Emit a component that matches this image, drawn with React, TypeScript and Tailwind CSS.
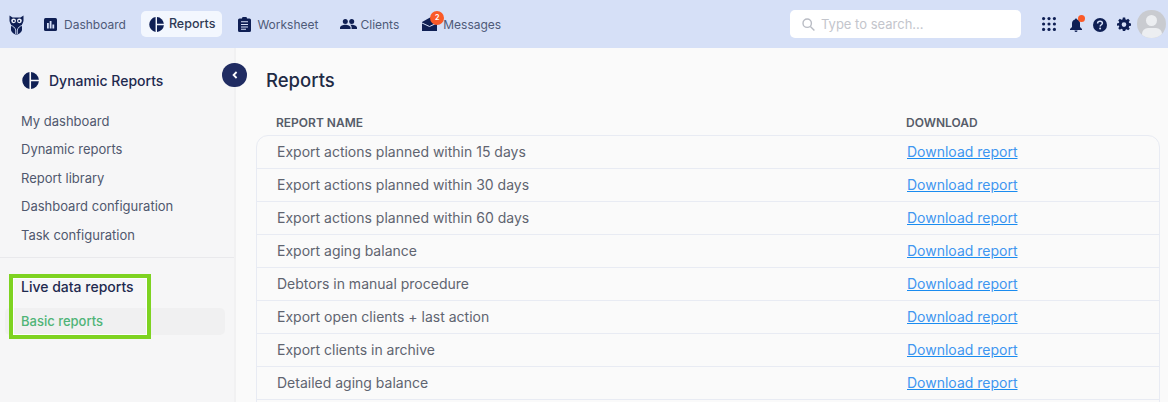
import React from "react";

const navy = "#0f1f54";

function PieIcon({ size = 16 }: { size?: number }) {
  return (
    <svg width={size} height={size} viewBox="0 0 16 16" className="shrink-0">
      <path d="M7 0.1A8 8 0 0 0 7 15.9Z" fill={navy} />
      <path d="M8.5 0.1A8 8 0 0 1 15.9 7.2H8.5Z" fill={navy} />
      <path d="M8.5 8.7H15.9A8 8 0 0 1 8.5 15.9Z" fill={navy} />
    </svg>
  );
}

function NavItem({ icon, label, active, gap = "gap-[7px]", extra = "" }: { icon: React.ReactNode; label: string; active?: boolean; gap?: string; extra?: string }) {
  return (
    <div className={`flex h-[26px] items-center ${gap} rounded-[5px] ${extra} ${active ? "bg-[#f3f7fe] pl-[8px] pr-[7px] text-[12.5px] font-medium text-[#2f3a55]" : "px-[8px] text-[12px] text-[#4e5a78]"}`}>
      {icon}
      <span className="pt-[1px]">{label}</span>
    </div>
  );
}

const reports = [
  "Export actions planned within 15 days",
  "Export actions planned within 30 days",
  "Export actions planned within 60 days",
  "Export aging balance",
  "Debtors in manual procedure",
  "Export open clients + last action",
  "Export clients in archive",
  "Detailed aging balance",
];

const sideLinks = ["My dashboard", "Dynamic reports", "Report library", "Dashboard configuration", "Task configuration"];

export default function App() {
  return (
    <div className="flex h-[402px] w-[1168px] flex-col overflow-hidden bg-[#fafafa] font-['Inter',sans-serif]">
      <header className="flex h-[48px] shrink-0 items-center bg-[#d6e0f7] pl-[9px] pr-[2px]">
        <svg width="15" height="20" viewBox="0 0 15 20" className="mr-[12px] mt-[1px] shrink-0">
          <path d="M0.5 0.5L3.5 2.5H11.5L14.5 0.5V5.5C14.5 7 13.5 8.5 13 9.5V15C12.5 17.5 9.5 19.5 7.5 19.5C5.5 19.5 2.5 17.5 2 15V9.5C1.5 8.5 0.5 7 0.5 5.5Z" fill={navy} />
          <circle cx="4.6" cy="5.8" r="2.4" fill="#eef2fc" />
          <circle cx="10.4" cy="5.8" r="2.4" fill="#eef2fc" />
          <circle cx="4.8" cy="5.9" r="1" fill={navy} />
          <circle cx="10.2" cy="5.9" r="1" fill={navy} />
          <path d="M2 10.5C4 11 6 12.5 6.7 15V19M13 10.5C11 11 9 12.5 8.3 15V19" stroke="#d6e0f7" strokeWidth="0.9" fill="none" />
        </svg>
        <nav className="flex items-center gap-[7px]">
          <NavItem
            label="Dashboard"
            icon={
              <svg width="13" height="13" viewBox="0 0 13 13">
                <rect width="13" height="13" rx="1.5" fill={navy} />
                <rect x="3" y="5" width="1.8" height="5.5" fill="#d6e0f7" />
                <rect x="5.7" y="3" width="1.8" height="7.5" fill="#d6e0f7" />
                <rect x="8.4" y="6.5" width="1.8" height="4" fill="#d6e0f7" />
              </svg>
            }
          />
          <NavItem label="Reports" active gap="gap-[5px]" icon={<PieIcon size={15} />} />
          <NavItem
            label="Worksheet"
            gap="gap-[6px]"
            extra="ml-[1px]"
            icon={
              <svg width="13" height="15" viewBox="0 0 13 15">
                <path d="M1.5 1.5H4A2.5 2 0 0 1 9 1.5H11.5A1.5 1.5 0 0 1 13 3V13.5A1.5 1.5 0 0 1 11.5 15H1.5A1.5 1.5 0 0 1 0 13.5V3A1.5 1.5 0 0 1 1.5 1.5Z" fill={navy} />
                <path d="M3 4.7H10M3 7.5H10M3 10H10M3 12.3H8" stroke="#d6e0f7" strokeWidth="1.1" />
              </svg>
            }
          />
          <NavItem
            label="Clients"
            gap="gap-[3px]"
            extra="-ml-[1px]"
            icon={
              <svg width="17" height="10" viewBox="0 0 17 10">
                <circle cx="5.3" cy="2.5" r="2.5" fill={navy} />
                <circle cx="11.7" cy="2.5" r="2.5" fill={navy} />
                <path d="M0 10V8.5C0 6.8 3 5.7 5.3 5.7S10.6 6.8 10.6 8.5V10Z" fill={navy} />
                <path d="M11.6 10V8.5C11.6 7.3 11 6.4 10.2 5.8C10.7 5.7 11.2 5.7 11.7 5.7C14 5.7 17 6.8 17 8.5V10Z" fill={navy} />
              </svg>
            }
          />
          <div className="relative ml-[8px] flex h-[26px] items-center gap-[6px] text-[12px] text-[#4e5a78]">
            <svg width="15" height="14" viewBox="0 0 15 14" className="-mt-[1px]">
              <path d="M0 5L9 0L15 4V14H0Z" fill={navy} />
              <path d="M0 6L7.5 9.5L15 6" stroke="#d6e0f7" strokeWidth="1" fill="none" />
            </svg>
            <span className="pt-[1px]">Messages</span>
            <span className="absolute left-[8px] top-[0px] flex h-[14px] w-[14px] items-center justify-center rounded-full bg-[#fa5a28] text-[7px] font-bold text-white">2</span>
          </div>
        </nav>
        <div className="ml-auto flex h-[28px] w-[231px] items-center gap-[6px] rounded-[5px] bg-white pl-[12px] text-[13px] text-[#c3c5cc]">
          <svg width="13" height="13" viewBox="0 0 13 13" fill="none" stroke="#b9bcc4" strokeWidth="1.4">
            <circle cx="5.2" cy="5.2" r="4.2" />
            <path d="M8.4 8.4L12.4 12.4" />
          </svg>
          <span className="pt-[1px]">Type to search...</span>
        </div>
        <svg width="14" height="14" viewBox="0 0 15 15" className="ml-[21px]" fill={navy}>
          {[1.7, 7.5, 13.3].flatMap((y) => [1.7, 7.5, 13.3].map((x) => <circle key={`${x}-${y}`} cx={x} cy={y} r="1.7" />))}
        </svg>
        <div className="relative ml-[14px] mt-[2px] h-[14px] w-[12px]">
          <svg width="12" height="14" viewBox="0 0 12 14" fill={navy}>
            <path d="M6 0.5C6.6 0.5 7 1 7 1.5C9 2 10 3.5 10 5.5V9L12 11V12H0V11L2 9V5.5C2 3.5 3 2 5 1.5C5 1 5.4 0.5 6 0.5Z" />
            <path d="M4.5 12.5H7.5A1.5 1.5 0 0 1 4.5 12.5Z" />
          </svg>
          <span className="absolute left-[8px] top-[-3px] h-[7px] w-[7px] rounded-full bg-[#fa5a28]" />
        </div>
        <svg width="14" height="14" viewBox="0 0 14 14" className="ml-[11px] mt-[1px]">
          <circle cx="7" cy="7" r="7" fill={navy} />
          <path d="M4.6 5.4C4.6 4 5.7 3.2 7 3.2C8.4 3.2 9.4 4 9.4 5.2C9.4 6.7 7.2 6.8 7.2 8.4" stroke="#d6e0f7" strokeWidth="1.5" fill="none" />
          <circle cx="7.1" cy="10.5" r="1" fill="#d6e0f7" />
        </svg>
        <svg width="14" height="14" viewBox="0 0 24 24" className="ml-[10px]" fill={navy}>
          <path fillRule="evenodd" d="M10 1h4l.6 3.1 1.9.8 2.6-1.8 2.8 2.8-1.8 2.6.8 1.9L24 11v4l-3.1.6-.8 1.9 1.8 2.6-2.8 2.8-2.6-1.8-1.9.8L14 24h-4l-.6-3.1-1.9-.8-2.6 1.8-2.8-2.8 1.8-2.6-.8-1.9L0 15v-4l3.1-.6.8-1.9L2.1 5.9l2.8-2.8 2.6 1.8 1.9-.8L10 1Zm2 8a4 4 0 1 0 0 8 4 4 0 0 0 0-8Z" />
        </svg>
        <div className="relative ml-[6px] flex h-[28px] w-[29px] items-center justify-center overflow-hidden rounded-full bg-[#c9cbd0]">
          <span className="absolute top-[5px] h-[11px] w-[11px] rounded-full bg-[#eceef1]" />
          <span className="absolute top-[18px] h-[12px] w-[20px] rounded-full bg-[#eceef1]" />
        </div>
      </header>

      <div className="flex min-h-0 flex-1">
        <aside className="relative w-[236px] shrink-0 border-r-2 border-[#f1f1f2] bg-[#f6f6f7]">
          <div className="flex h-[59px] items-center gap-[10px] pl-[22px] pt-[6px] text-[14px] font-medium text-[#1e2a4f]">
            <PieIcon size={17} />
            <span>Dynamic Reports</span>
          </div>
          <span className="absolute right-[-13px] top-[15px] z-10 flex h-[24px] w-[25px] items-center justify-center rounded-full bg-[#202c62]">
            <svg width="6" height="8" viewBox="0 0 6 8" fill="none" stroke="white" strokeWidth="1.8">
              <path d="M4.6 1L1.6 4L4.6 7" />
            </svg>
          </span>
          <ul className="flex flex-col border-b border-[#e9e9ec] pb-[7px] pl-[21px] text-[13px] text-[#50586e]">
            {sideLinks.map((l) => (
              <li key={l} className="flex h-[28.5px] items-center">{l}</li>
            ))}
          </ul>
          <div className="flex h-[57px] items-center pl-[21px] text-[14px] font-medium text-[#1e2a4f]">Live data reports</div>
          <div className="-mt-[7px] ml-[5px] flex h-[27px] w-[220px] items-center rounded-[5px] bg-[#f0f0f1] pl-[16px] pt-[1px] text-[13px] font-medium text-[#4fb477]">Basic reports</div>
          <div className="absolute left-[9px] top-[226px] h-[65px] w-[142px] border-[4px] border-[#7ed321] shadow-[inset_0_0_0_1px_rgba(255,255,255,0.9)]" />
        </aside>

        <main className="min-w-0 flex-1 pl-[20px] pr-[8px]">
          <h1 className="mt-[19px] pl-[10px] text-[18.5px] font-medium leading-[26px] text-[#1f2b45]">Reports</h1>
          <div className="mt-[18px] flex h-[24px] items-center text-[12px] font-semibold text-[#565c69]">
            <span className="w-[650px] pl-[20px]">REPORT NAME</span>
            <span>DOWNLOAD</span>
          </div>
          <div className="rounded-t-[12px] border border-[#e8ebf3]">
            {reports.map((r, i) => (
              <div key={r} className={`flex items-center pb-[2px] text-[14px] text-[#5f6470] ${i ? "h-[33px] border-t border-[#e8ebf3]" : "h-[32px]"}`}>
                <span className="w-[650px] pl-[20px]">{r}</span>
                <a className="text-[#4096f0] underline decoration-[#1a8cf0]">Download report</a>
              </div>
            ))}
            <div className="h-[33px] border-t border-[#e8ebf3]" />
          </div>
        </main>
      </div>
    </div>
  );
}
